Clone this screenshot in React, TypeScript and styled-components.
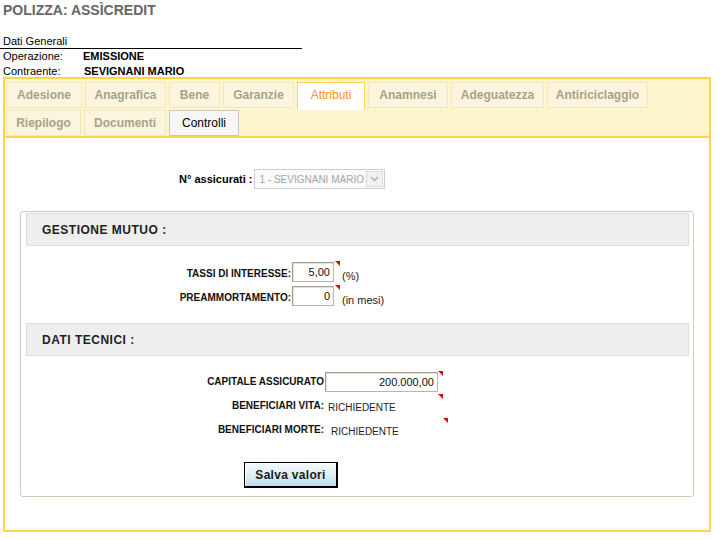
import React from 'react';
import styled, {createGlobalStyle} from 'styled-components';

const GlobalStyle = createGlobalStyle`
    html, body {
        margin: 0;
        padding: 0;
        background: #fff;
    }
    body {
        font-family: "Liberation Sans", Arial, sans-serif;
        font-size: 11px;
        color: #000;
    }
`;

const rowTabs = [
    [
        {label: 'Adesione', w: 76},
        {label: 'Anagrafica', w: 81},
        {label: 'Bene', w: 51},
        {label: 'Garanzie', w: 71},
        {label: 'Attributi', w: 68, state: 'active'},
        {label: 'Anamnesi', w: 80},
        {label: 'Adeguatezza', w: 93},
        {label: 'Antiriciclaggio', w: 101},
    ],
    [
        {label: 'Riepilogo', w: 75},
        {label: 'Documenti', w: 82},
        {label: 'Controlli', w: 70, state: 'current'},
    ],
];

function App() {
    return (
        <Page>
            <GlobalStyle/>
            <Title>POLIZZA: ASSÌCREDIT</Title>

            <Summary>
                <SummaryHead>Dati Generali</SummaryHead>
                <SummaryRow>
                    <span>Operazione:</span>
                    <SummaryValue>EMISSIONE</SummaryValue>
                </SummaryRow>
                <SummaryRow>
                    <span>Contraente:</span>
                    <SummaryValue $indent={1}>SEVIGNANI MARIO</SummaryValue>
                </SummaryRow>
            </Summary>

            <TabPanel>
                <TabHeader>
                    {rowTabs.map((row, i) =>
                        <TabRow key={i}>
                            {row.map(tab =>
                                <Tab key={tab.label} $w={tab.w} $state={tab.state}>{tab.label}</Tab>
                            )}
                        </TabRow>
                    )}
                </TabHeader>

                <Content>
                    <SelectRow>
                        <SelectLabel>N° assicurati :</SelectLabel>
                        <SelectBox>
                            <SelectText>1 - SEVIGNANI MARIO</SelectText>
                            <SelectArrow>
                                <svg width="9" height="6" viewBox="0 0 9 6">
                                    <path d="M1 1 L4.5 4.5 L8 1" fill="none" stroke="#b4b4b4" strokeWidth="1.6"/>
                                </svg>
                            </SelectArrow>
                        </SelectBox>
                    </SelectRow>

                    <Box>
                        <SectionBar>GESTIONE MUTUO :</SectionBar>
                        <FieldGrid $labelW={265} $labelPad={5} $after={17}>
                            <FieldLabel>TASSI DI INTERESSE:</FieldLabel>
                            <Input $w={42} defaultValue="5,00"/>
                            <Marker $shift={1}/>
                            <Unit>(%)</Unit>

                            <FieldLabel>PREAMMORTAMENTO:</FieldLabel>
                            <Input $w={42} defaultValue="0"/>
                            <Marker $shift={1}/>
                            <Unit>(in mesi)</Unit>
                        </FieldGrid>

                        <SectionBar>DATI TECNICI :</SectionBar>
                        <FieldGrid $labelW={298} $labelPad={3} $after={0}>
                            <FieldLabel>CAPITALE ASSICURATO</FieldLabel>
                            <Input $w={113} defaultValue="200.000,00"/>
                            <Marker $shift={0}/>
                            <span/>

                            <FieldLabel>BENEFICIARI VITA:</FieldLabel>
                            <FieldValue $indent={3}>RICHIEDENTE</FieldValue>
                            <Marker $shift={0} $up={2}/>
                            <span/>

                            <FieldLabel>BENEFICIARI MORTE:</FieldLabel>
                            <FieldValue $indent={6}>RICHIEDENTE</FieldValue>
                            <Marker $shift={5} $up={2}/>
                            <span/>
                        </FieldGrid>

                        <ButtonRow>
                            <SaveButton type="button">Salva valori</SaveButton>
                        </ButtonRow>
                    </Box>
                </Content>
            </TabPanel>
        </Page>
    );
}

const Page = styled.div`
    width: 720px;
    height: 540px;
    overflow: hidden;
`;

const Title = styled.h1`
    margin: 0;
    padding: 2px 3px 0;
    font-size: 14px;
    line-height: 16px;
    font-weight: bold;
    color: #666;
`;

const Summary = styled.div`
    margin-top: 16px;
    width: 302px;
`;

const SummaryHead = styled.div`
    padding-left: 3px;
    line-height: 14px;
    border-bottom: 1px solid #000;
`;

const SummaryRow = styled.div`
    display: grid;
    grid-template-columns: 80px auto;
    padding-left: 3px;
    line-height: 14px;
    & + & {
        margin-top: 1px;
    }
`;

const SummaryValue = styled.span<{ $indent?: number }>`
    font-weight: bold;
    padding-left: ${p => p.$indent || 0}px;
`;

const TabPanel = styled.div`
    margin: -1px 0 0 3px;
    width: 708px;
    height: 455px;
    box-sizing: border-box;
    border: 2px solid #fbd64c;
    display: flex;
    flex-direction: column;
`;

const TabHeader = styled.div`
    background: #fff5cd;
    padding: 3px 0 0 1px;
    border-bottom: 2px solid #fbd64c;
    display: flex;
    flex-direction: column;
    gap: 2px;
`;

const TabRow = styled.div`
    display: flex;
    align-items: flex-start;
    gap: 3px;
    height: 26px;
`;

const Tab = styled.div<{ $w: number; $state?: string }>`
    width: ${p => p.$w}px;
    height: ${p => p.$state === 'active' ? 28 : 26}px;
    box-sizing: border-box;
    display: flex;
    align-items: center;
    justify-content: center;
    padding-bottom: ${p => p.$state === 'active' ? 2 : 0}px;
    font-size: 12px;
    white-space: nowrap;
    font-weight: ${p => p.$state ? 'normal' : 'bold'};
    color: ${p => p.$state === 'active' ? '#f7941d' : p.$state === 'current' ? '#000' : '#a9a28a'};
    background: ${p => p.$state === 'active' ? '#fff' : p.$state === 'current' ? '#f7f7f7' : '#fcf5de'};
    border: 1px solid ${p => p.$state === 'active' ? '#fbd64c' : p.$state === 'current' ? '#c8c8c8' : '#f1e7c5'};
    border-bottom-color: ${p => p.$state === 'active' ? '#fff' : p.$state === 'current' ? '#c8c8c8' : '#f1e7c5'};
`;

const Content = styled.div`
    flex: 1;
    background: #fff;
    padding-top: 31px;
`;

const SelectRow = styled.div`
    display: flex;
    align-items: center;
    gap: 2px;
    padding-left: 174px;
`;

const SelectLabel = styled.span`
    font-weight: bold;
    font-size: 11px;
`;

const SelectBox = styled.div`
    width: 131px;
    height: 20px;
    box-sizing: border-box;
    border: 1px solid #cfcfcf;
    background: #fafafa;
    display: flex;
    align-items: center;
    justify-content: space-between;
    padding: 0 1px 0 4px;
`;

const SelectText = styled.span`
    font-size: 10px;
    color: #a6a6a6;
    white-space: nowrap;
`;

const SelectArrow = styled.span`
    width: 17px;
    height: 16px;
    box-sizing: border-box;
    border: 1px solid #dcdcdc;
    background: #f1f1f1;
    display: flex;
    align-items: center;
    justify-content: center;
`;

const Box = styled.div`
    margin: 22px 0 0 15px;
    width: 674px;
    box-sizing: border-box;
    border: 1px solid #cdcab6;
    border-radius: 3px;
    padding: 1px 4px 8px 5px;
`;

const SectionBar = styled.div`
    height: 33px;
    box-sizing: border-box;
    background: #eeeeee;
    border: 1px solid #dddddd;
    display: flex;
    align-items: center;
    padding-left: 15px;
    font-size: 12px;
    font-weight: bold;
    letter-spacing: 0.5px;
    color: #222;
`;

const FieldGrid = styled.div<{ $labelW: number; $labelPad: number; $after: number }>`
    display: grid;
    grid-template-columns: ${p => p.$labelW}px auto 6px auto;
    grid-auto-rows: 20px;
    row-gap: 4px;
    justify-content: start;
    margin: 16px 0 ${p => p.$after}px;

    & > label {
        padding-top: ${p => p.$labelPad}px;
    }
`;

const FieldLabel = styled.label`
    align-self: start;
    text-align: right;
    font-size: 10px;
    font-weight: bold;
    line-height: 14px;
    white-space: nowrap;
    color: #111;
`;

const Input = styled.input<{ $w: number }>`
    width: ${p => p.$w}px;
    height: 20px;
    margin: 0 0 0 1px;
    box-sizing: border-box;
    border: 1px solid #b9b6a6;
    border-top-color: #9f9c8e;
    border-left-color: #9f9c8e;
    box-shadow: inset 1px 1px 0 #e4e2d8;
    padding: 0 3px 0 2px;
    text-align: right;
    font-family: "Liberation Sans", Arial, sans-serif;
    font-size: 11px;
    color: #111;
    background: #fff;
    outline: none;
`;

const FieldValue = styled.span<{ $indent: number }>`
    align-self: start;
    padding: 5px 0 0 ${p => p.$indent + 1}px;
    font-size: 10px;
    line-height: 14px;
    color: #222;
`;

const Marker = styled.span<{ $shift: number; $up?: number }>`
    align-self: start;
    width: 0;
    height: 0;
    margin: -${p => p.$up || 1}px 0 0 ${p => p.$shift}px;
    border-top: 5px solid #e00000;
    border-left: 5px solid transparent;
`;

const Unit = styled.span`
    align-self: start;
    padding: 7px 0 0 2px;
    font-size: 11px;
    line-height: 14px;
    color: #222;
    white-space: nowrap;
`;

const ButtonRow = styled.div`
    margin-top: 22px;
    padding-left: 218px;
`;

const SaveButton = styled.button`
    width: 94px;
    height: 26px;
    box-sizing: border-box;
    border: 1px solid #000;
    border-right-width: 2px;
    border-bottom-width: 2px;
    background: linear-gradient(#f3fafc, #e2f1f6 45%, #bcdde8);
    box-shadow: inset 1px 1px 0 #fff;
    font-family: "Liberation Sans", Arial, sans-serif;
    font-size: 12px;
    font-weight: bold;
    letter-spacing: 0.3px;
    color: #1a1a1a;
    padding: 0;
    cursor: pointer;
`;

export default App;
